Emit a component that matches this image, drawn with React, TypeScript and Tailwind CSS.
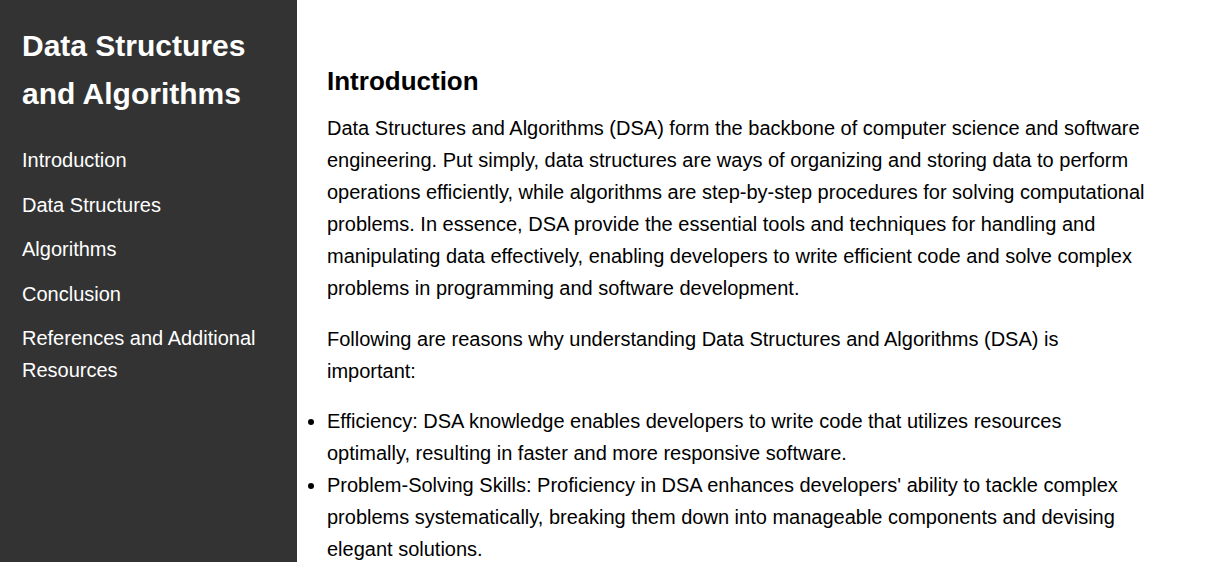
const navItems = [
  'Introduction',
  'Data Structures',
  'Algorithms',
  'Conclusion',
  'References and Additional Resources',
]

export default function App() {
  return (
    <div className="flex h-screen overflow-hidden bg-white font-['Liberation_Sans',Arial,sans-serif]">
      <aside className="w-[297px] shrink-0 bg-[#333333] px-[22px] pt-[22px] text-white">
        <h1 className="m-0 text-[30px] font-bold leading-[48px]">Data Structures and Algorithms</h1>
        <ul className="mt-[26px]">
          {navItems.map((item) => (
            <li key={item} className="mb-[12.5px]">
              <a href={'#' + item.toLowerCase().replace(/ /g, '-')} className="text-[20px] leading-[32px] text-white">
                {item}
              </a>
            </li>
          ))}
        </ul>
      </aside>

      <main className="flex-1 px-[30px] pt-[62px] text-black">
        <div className="max-w-[820px]">
          <h2 className="text-[26px] font-bold leading-[38.4px]">Introduction</h2>
          <p className="mt-[12px] text-[20px] leading-[32px]">
            Data Structures and Algorithms (DSA) form the backbone of computer science and software
            engineering. Put simply, data structures are ways of organizing and storing data to perform
            operations efficiently, while algorithms are step-by-step procedures for solving computational
            problems. In essence, DSA provide the essential tools and techniques for handling and
            manipulating data effectively, enabling developers to write efficient code and solve complex
            problems in programming and software development.
          </p>
          <p className="mt-[19px] text-[20px] leading-[32px]">
            Following are reasons why understanding Data Structures and Algorithms (DSA) is important:
          </p>
          <ul className="mt-[18px] list-disc pl-0 text-[20px] leading-[32px]">
            <li>
              Efficiency: DSA knowledge enables developers to write code that utilizes resources optimally,
              resulting in faster and more responsive software.
            </li>
            <li>
              Problem-Solving Skills: Proficiency in DSA enhances developers' ability to tackle complex
              problems systematically, breaking them down into manageable components and devising elegant
              solutions.
            </li>
          </ul>
        </div>
      </main>
    </div>
  )
}
